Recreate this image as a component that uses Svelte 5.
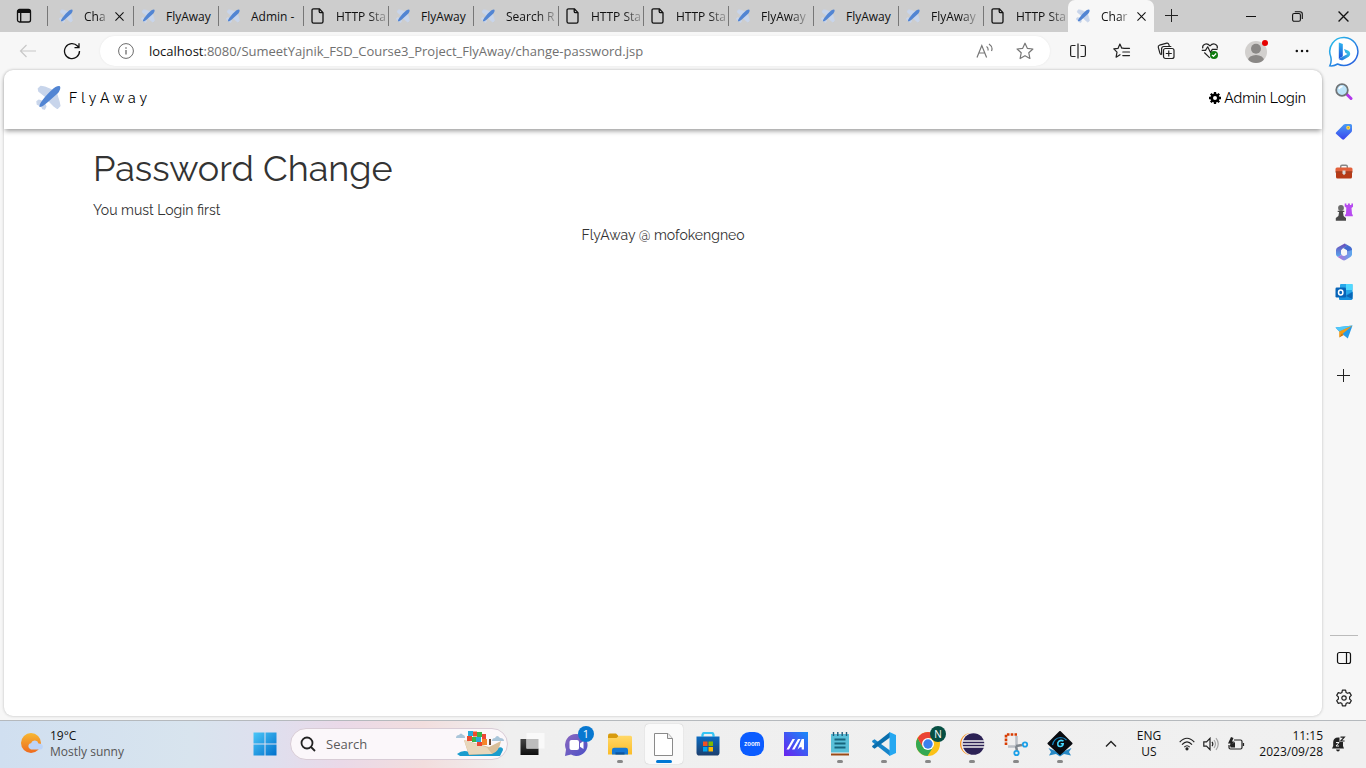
<script>
  const tabs = [
    { title: 'Cha', icon: 'plane', close: true },
    { title: 'FlyAway', icon: 'plane' },
    { title: 'Admin - ', icon: 'plane' },
    { title: 'HTTP Sta', icon: 'page', fade: true },
    { title: 'FlyAway', icon: 'plane' },
    { title: 'Search R', icon: 'plane', fade: true },
    { title: 'HTTP Sta', icon: 'page', fade: true },
    { title: 'HTTP Sta', icon: 'page', fade: true },
    { title: 'FlyAway', icon: 'plane', fade: true },
    { title: 'FlyAway', icon: 'plane' },
    { title: 'FlyAway', icon: 'plane', fade: true },
    { title: 'HTTP Sta', icon: 'page', fade: true },
    { title: 'Char', icon: 'plane', close: true, active: true }
  ];
  const tools = [
    ['split', 'Split screen'],
    ['favorites', 'Favorites'],
    ['collections', 'Collections'],
    ['health', 'Browser essentials'],
    ['avatar', 'Profile'],
    ['dots', 'Settings and more']
  ];
  const side = [
    ['search', 'Search'],
    ['tag', 'Shopping'],
    ['toolbox', 'Tools'],
    ['chess', 'Games'],
    ['m365', 'Microsoft 365'],
    ['outlook', 'Outlook'],
    ['drop', 'Drop']
  ];
  const apps = [
    { icon: 'taskview', name: 'Task view' },
    { icon: 'chat', name: 'Chat', badge: '1' },
    { icon: 'folder', name: 'File Explorer', run: true },
    { icon: 'blank', name: 'Document', active: true },
    { icon: 'store', name: 'Microsoft Store' },
    { icon: 'zoom', name: 'Zoom' },
    { icon: 'myasus', name: 'MyASUS' },
    { icon: 'notepad', name: 'Notepad', run: true },
    { icon: 'vscode', name: 'Visual Studio Code', run: true },
    { icon: 'chrome', name: 'Chrome', run: true, badge: 'N', green: true },
    { icon: 'eclipse', name: 'Eclipse', run: true },
    { icon: 'snip', name: 'Snipping Tool', run: true },
    { icon: 'glow', name: 'Game tool', run: true }
  ];
</script>

{#snippet plane(size)}
  <svg width={size} height={size} viewBox="0 0 24 24" aria-hidden="true">
    <g fill="#c8d5eb" stroke="#c8d5eb" stroke-width="1.2" stroke-linejoin="round">
      <path d="M2.200 3.500 4.500 1.300 8.500 2 16.500 5.300 10.500 13 8.500 10.500 2.700 6Z" />
      <path d="M19.500 7.500 22 15.500 23 20 20.500 22.500 17.500 20.500 11 14Z" />
      <path d="M.9 15.800 2.600 14.600 7 16 9.500 20.500 8.200 23.200 6.400 22.800 5.400 20.500 1.200 18.500Z" />
    </g>
    <path d="M3.400 21C2.800 19.500 5 15.700 8 12.300 12.500 7.200 18 1 21.900 1 24.400 1 23.300 5 21.200 7.600L12.300 15.700C9 18.700 4.500 22 3.400 21Z" fill="#5285d3" />
  </svg>
{/snippet}

{#snippet cross(size)}
  <svg width={size} height={size} viewBox="0 0 10 10" stroke="#111" stroke-width="1.2" aria-hidden="true"><path d="M.5.5l9 9M9.500.5l-9 9" /></svg>
{/snippet}

{#snippet ico(name)}
  {#if name === 'plane'}
    {@render plane(14)}
  {:else if name === 'page'}
    <svg width="14" height="16" viewBox="0 0 14 16" fill="none" stroke="#111" stroke-width="1.3" stroke-linejoin="round"><path d="M8.300.8H2.600Q1 .8 1 2.400V13.600Q1 15.200 2.600 15.200H10.400Q12 15.200 12 13.600V4.600ZM8.200.8V3.400Q8.200 4.700 9.500 4.700H12" /></svg>
  {:else if name === 'split'}
    <svg width="16" height="16" viewBox="0 0 16 16" fill="none" stroke="#222" stroke-width="1.2"><path d="M5.500 2.500H2Q.6 2.500.6 4v8q0 1.500 1.400 1.500h3.500M10.500 2.500h3.500q1.400 0 1.400 1.500v8q0 1.500-1.400 1.500h-3.500M8 .500v15" /></svg>
  {:else if name === 'favorites'}
    <svg width="18" height="16" viewBox="0 0 18 16" fill="none" stroke="#222" stroke-width="1.2" stroke-linejoin="round" stroke-linecap="round"><path d="M10.300 5.200H8.800L6.900 1 5 5.400.8 5.900 4 9.200 3.100 14.200 7 11.700M10.600 5.300H16.500M9.800 9H16.500M9.800 12.600H16.500" /></svg>
  {:else if name === 'collections'}
    <svg width="18" height="18" viewBox="0 0 18 18" fill="none" stroke="#222" stroke-width="1.2"><rect x="6.500" y="6.500" width="10.500" height="10" rx="2" /><path d="M11.750 8.500v6M8.800 11.500h6M4.400 12.700Q3.200 12.500 2.900 11.200L1.300 5.300Q.9 3.700 2.500 3.200L9.800 1.200Q11.300.9 11.800 2.400L12.300 4.200M4.600 12.700V6.700Q4.600 4.500 6.800 4.500H14.300" /></svg>
  {:else if name === 'health'}
    <svg width="18" height="18" viewBox="0 0 18 18" fill="none" stroke="#222" stroke-width="1.2" stroke-linejoin="round"><path d="M1.700 6.300C1 2.300 5.700.2 9 3.900 12.300.2 17 2.300 16.300 6.300M.7 8.400H4.500L6.700 4.800 9.500 10.500 11.300 7.400H16.500M3.300 10.500 8.800 15.900" /><circle cx="13" cy="13" r="4" fill="#107c10" stroke="none" /><path d="M11 13l1.500 1.400 2.600-2.900" stroke="#fff" /></svg>
  {:else if name === 'avatar'}
    <svg width="24" height="24" viewBox="0 0 24 24"><clipPath id="av"><circle cx="12" cy="13" r="11" /></clipPath><circle cx="12" cy="13" r="11" fill="#d2d0ce" /><circle cx="12" cy="9.700" r="5" fill="#8a8886" /><ellipse cx="12" cy="21.500" rx="8" ry="5.500" fill="#8a8886" clip-path="url(#av)" /><circle cx="21" cy="4" r="3" fill="#e60000" /></svg>
  {:else if name === 'dots'}
    <svg width="16" height="4" viewBox="0 0 16 4" fill="#111"><circle cx="2.800" cy="2" r="1.250" /><circle cx="8" cy="2" r="1.250" /><circle cx="13.200" cy="2" r="1.250" /></svg>
  {:else if name === 'bing'}
    <svg width="32" height="32" viewBox="0 0 32 32"><path d="M16.500 1.500A14 14 0 1 1 9.600 28Q6 30.300 1.800 29.800 4 25.500 2.700 20.500A14 14 0 0 1 16.500 1.500Z" fill="#fff" stroke="url(#bingRing)" stroke-width="1.500" /><path d="M10.800 6.500 14.800 8V20.300L10.800 22.800Z" fill="url(#bingB)" /><path d="M10.800 22.800C12 24.500 14 24.500 15.500 23.700L20.700 20.700C23.500 18.500 22 15.500 20 14.500L16 13 17.400 16.800 19.500 18Z" fill="url(#bingC)" /></svg>
  {:else if name === 'search'}
    <svg width="18" height="18" viewBox="0 0 18 18"><path d="M11.500 11 16 15.500" stroke="#b236eb" stroke-width="3" stroke-linecap="round" /><circle cx="7" cy="7" r="5.800" fill="#bde4fa" stroke="#707477" stroke-width="1.800" /><path d="M4 6q1-2.500 3.500-2.500" stroke="#fff" stroke-width="1.500" fill="none" /></svg>
  {:else if name === 'tag'}
    <svg width="18" height="18" viewBox="0 0 18 18"><path d="M1 9.500 8.800 1.600Q9.500 1 10.500 1H15.500Q17 1 17 2.500V7.500Q17 8.500 16.300 9.200L9.200 16.300Q8.200 17.200 7.200 16.300L1 10.800Q.4 10.200 1 9.500Z" fill="url(#tagG)" /><circle cx="13.200" cy="4.700" r="2" fill="#ffd84d" /><circle cx="13.200" cy="4.700" r=".8" fill="#c99a12" /></svg>
  {:else if name === 'toolbox'}
    <svg width="18" height="18" viewBox="0 0 18 18"><path d="M5.700 5V3.500Q5.700 2.200 7 2.200H11Q12.300 2.200 12.300 3.500V5" fill="none" stroke="#858585" stroke-width="1.400" /><rect x=".5" y="4.500" width="17" height="5" rx="1.500" fill="#e2603b" /><path d="M1 9.300H17V14Q17 15.500 15.500 15.500H2.500Q1 15.500 1 14Z" fill="#b63a17" /><path d="M.5 9h17" stroke="#87280d" /><path d="M7.500 7.600h3v3l-1.500 1.600-1.500-1.600z" fill="#d9d9d9" /></svg>
  {:else if name === 'chess'}
    <svg width="18" height="18" viewBox="0 0 18 18"><path d="M9.700.5h1.700v1.500h1.500V.5h2v1.500h1.500V.5H18v3.200l-1.500 1.200.5 6 .8 1v1.300H10V12l1-1.200.3-6L9.700 3.500Z" fill="#b74bf0" /><circle cx="6" cy="5" r="2.900" fill="#6b6b6b" /><path d="M2.700 7.700H9.300V9H8L8.600 13 11 15V17.700H.8V15L3.400 13 4.100 9H2.700Z" fill="#494949" /></svg>
  {:else if name === 'm365'}
    <svg width="18" height="18" viewBox="0 0 18 18"><path d="M9.800.5 2.800 4.200Q1 5.200 1 7V11Q1 13 3 14L6.500 12V7.400Q6.500 6 8 5.200L12 3Z" fill="url(#mA)" /><path d="M9.800.5 15.500 3.800Q17 4.700 17 6.600V11.200L12 8.500 8.200 5 11.500 3Z" fill="#436bcf" /><path d="M17 7V11.200Q17 13 15.400 14L10.500 17Q9 17.800 7.500 17L2.700 14 6.500 12Q9 13.500 10.500 12.500L12 11.500V8.500Z" fill="url(#mB)" /><path d="M9 5.500 12 7.300V10.700L9 12.500 6 10.700V7.300Z" fill="#f7f7f7" /></svg>
  {:else if name === 'outlook'}
    <svg width="18" height="18" viewBox="0 0 18 18"><rect x="5" y="1" width="12.500" height="13" rx="1" fill="#28a8ea" /><path d="M11 1h6.500v6H11z" fill="#50d9ff" /><path d="M4 9.500 11 12l6.500-3.500V15.500Q17.500 17 16 17H5Q4 17 4 16Z" fill="#1490df" /><path d="M11 13l6.500-4v7z" fill="#0a66b5" /><rect x=".5" y="4.500" width="10.500" height="10" rx="1.200" fill="#0764b8" /><ellipse cx="5.700" cy="9.500" rx="2.200" ry="2.500" fill="none" stroke="#fff" stroke-width="1.500" /></svg>
  {:else if name === 'drop'}
    <svg width="18" height="18" viewBox="0 0 18 18"><path d="M.5 4.500 17.500 2.500 12.800 15.500 4 8.300Z" fill="#249bea" /><path d="M.5 4.500 17.500 2.500 4.500 8.500Z" fill="#50c9fa" /><path d="M17.500 2.500 4.200 8.400V14.500L6.800 11.500Z" fill="#f29b17" /><path d="M4.200 14.500 6.900 10.500 8.800 12Z" fill="#c6710b" /></svg>
  {:else if name === 'plus'}
    <svg width="14" height="14" viewBox="0 0 14 14" stroke="#222" stroke-width="1"><path d="M6.500 0v13M0 6.500h13" /></svg>
  {:else if name === 'panel'}
    <svg width="16" height="14" viewBox="0 0 16 14" fill="none" stroke="#111" stroke-width="1.200"><rect x="1.500" y="1.500" width="13" height="11" rx="2" /><path d="M10.500 1.500v11" /></svg>
  {:else if name === 'gear'}
    <svg width="18" height="18" viewBox="0 0 18 18" fill="none" stroke="#222" stroke-width="1.200" stroke-linejoin="round"><circle cx="9" cy="9" r="2.200" /><path d="M7.400 1.200h3.200l.5 2.300 1.300.8 2.300-.7 1.600 2.800-1.700 1.600v2l1.700 1.600-1.600 2.800-2.300-.7-1.300.8-.5 2.300H7.400l-.5-2.300-1.300-.8-2.300.7-1.600-2.800L3.400 10V8L1.700 6.400l1.600-2.800 2.300.7 1.300-.8Z" /></svg>
  {:else if name === 'taskview'}
    <svg width="26" height="26" viewBox="0 0 26 26"><rect x="1.500" y="8" width="18" height="16" fill="url(#tv)" /><path d="M7.500 2h18v15.500h-18z" fill="#f9f9f9" /><path d="M7.500 8h12v9.500h-12z" fill="#bcbcbc" /></svg>
  {:else if name === 'chat'}
    <svg width="26" height="26" viewBox="0 0 26 26"><path d="M13 3A11 11 0 1 1 8 23.500L2 25 3 18.500A11 11 0 0 1 13 3Z" fill="url(#chatG)" /><rect x="6.500" y="9" width="9.500" height="10" rx="2" fill="#fff" /><path d="M17 12.500 20.500 10v8L17 15.700Z" fill="#fff" /></svg>
  {:else if name === 'folder'}
    <svg width="26" height="26" viewBox="0 0 26 26"><path d="M1 4.500Q1 2.500 3 2.500H9L11.500 5V8H1Z" fill="#d89b0d" /><path d="M1 7H9.500L12 4.800H23.500Q25 4.800 25 6.300V23.500H1Z" fill="url(#foldG)" /><path d="M5 23.500V19Q5 16.800 7.200 16.800H18.800Q21 16.800 21 19V23.500Z" fill="#1478d4" /><path d="M8.500 21.300h9v2.200h-9z" fill="#0b559f" /></svg>
  {:else if name === 'blank'}
    <svg width="22" height="26" viewBox="0 0 22 26"><path d="M1.500 2.500H15L19.500 7.500V24.500H1.500Z" fill="#fff" stroke="#8a8a8a" /><path d="M14.500 2.500V7.500H19.500" fill="#eee" stroke="#8a8a8a" /></svg>
  {:else if name === 'store'}
    <svg width="26" height="26" viewBox="0 0 26 26"><path d="M7.500 8V4Q7.500 2 9.500 2H16.500Q18.500 2 18.500 4V8" fill="none" stroke="#36c5f5" stroke-width="1.800" /><path d="M1.500 5.500h23v16.200Q24.500 24.500 21.700 24.500H4.300Q1.500 24.500 1.500 21.700Z" fill="url(#storeG)" /><path d="M7.500 5.500V4Q7.500 2 9.500 2H16.500Q18.500 2 18.500 4V5.500" fill="none" stroke="#36c5f5" stroke-width="1.800" /><path d="M8 10.500h4.500V15H8z" fill="#f25022" /><path d="M13.500 10.500H18V15h-4.500z" fill="#7fba00" /><path d="M8 16h4.500v4.500H8z" fill="#00a4ef" /><path d="M13.500 16H18v4.500h-4.500z" fill="#ffb900" /></svg>
  {:else if name === 'zoom'}
    <svg width="26" height="26" viewBox="0 0 26 26"><rect x="1" y="1" width="24" height="24" rx="9.500" fill="#0b5cff" /><text x="13" y="15" text-anchor="middle" font-family="Inter, sans-serif" font-size="6" font-weight="600" fill="#fff">zoom</text></svg>
  {:else if name === 'myasus'}
    <svg width="26" height="26" viewBox="0 0 26 26"><rect x="1" y="1" width="24" height="24" fill="url(#asusG)" /><path d="M3.500 18.500 9.500 8H12L6 18.500ZM9 18.500 15 8h2.500l-6 10.500ZM14.500 18.500 18.700 8H21v10.500h-2.300V16.300H17Z" fill="#fff" /></svg>
  {:else if name === 'notepad'}
    <svg width="20" height="26" viewBox="0 0 20 26"><path d="M1 3h18v19H1z" fill="#59bfd8" /><path d="M1 22h18v2.500H1z" fill="#9b4a16" /><path d="M1 21.500h18v1H1z" fill="#f2f2f2" /><path d="M3.500 1v4M7.800 1v4M12.200 1v4M16.500 1v4" stroke="#235a78" stroke-width="1.400" /><path d="M4.500 8.500h11M4.500 12.500h11M4.500 16.500h11" stroke="#17647c" stroke-width="1.800" /></svg>
  {:else if name === 'vscode'}
    <svg width="26" height="26" viewBox="0 0 26 26"><path d="M1.200 9.800 3.500 8.300 19 19.500V25L1.200 11Z" fill="#1684c9" /><path d="M1.200 16 3.500 17.700 19 6.500V1L1.200 15Z" fill="#096ead" /><path d="M18.500 1 25 4V22L18.500 25Z" fill="#26a8f1" /></svg>
  {:else if name === 'chrome'}
    <svg width="26" height="26" viewBox="0 0 26 26"><circle cx="13" cy="13" r="12" fill="#fbc116" /><path d="M2.600 7A12 12 0 0 0 12.500 25L18.200 16 13 13 7.800 16Z" fill="#34a853" /><path d="M2.600 7A12 12 0 0 1 23.400 7H13V13L7.800 16Z" fill="#ea4335" /><circle cx="13" cy="13" r="6" fill="#fff" /><circle cx="13" cy="13" r="4.700" fill="#3b80ee" /></svg>
  {:else if name === 'eclipse'}
    <svg width="26" height="26" viewBox="0 0 26 26"><circle cx="12" cy="13" r="11" fill="#f7941e" /><circle cx="13.500" cy="13" r="11.200" fill="#f3f0f7" /><circle cx="14.500" cy="13" r="10.800" fill="#2c2255" /><path d="M4 10h21.500M3.500 13h22.500M4 16h21.500" stroke="#eee" stroke-width="1.300" /></svg>
  {:else if name === 'snip'}
    <svg width="26" height="26" viewBox="0 0 26 26"><path d="M3 14V3.500H14" fill="none" stroke="#d83b01" stroke-width="2.600" stroke-dasharray="2.600 1.200" /><path d="M13.500 5V15.500H5" fill="none" stroke="#babfc5" stroke-width="2.500" /><path d="M13 15 19 14M13 15 14 20" stroke="#7d858c" stroke-width="2.500" /><circle cx="22" cy="13.500" r="2.200" fill="none" stroke="#1ca0e8" stroke-width="1.800" /><circle cx="13.500" cy="22" r="2.200" fill="none" stroke="#1ca0e8" stroke-width="1.800" /></svg>
  {:else if name === 'glow'}
    <svg width="26" height="26" viewBox="0 0 26 26"><path d="M1.500 17 13 22 24.500 17 22 21 24 24.500 17 23 13 25.500 9 23 2 24.500 4 21Z" fill="#2789c6" /><path d="M13 1 24.500 12.500 13 23 1.500 12.500Z" fill="#090b10" stroke="#090b10" stroke-width="2" stroke-linejoin="round" /><path d="M5.500 14Q7 7 13.500 6.500 17 6.500 19.500 9" fill="none" stroke="#1387c5" stroke-width="1.200" /><path d="M16.500 10Q12.500 8.200 11 11.500 10 15.500 13.300 15.500 16 15.300 16.200 12.700H13.700" fill="none" stroke="#46d7ff" stroke-width="1.600" /></svg>
  {/if}
{/snippet}

<div class="screen">
  <svg class="defs" width="0" height="0" aria-hidden="true">
    <defs>
      <linearGradient id="bingRing" x1="0" y1="0" x2="1" y2="1"><stop offset="0" stop-color="#29c3ea" /><stop offset="1" stop-color="#2655dd" /></linearGradient>
      <linearGradient id="bingB" x1="0" y1="0" x2="0" y2="1"><stop offset="0" stop-color="#2eb7f0" /><stop offset="1" stop-color="#1b4dd8" /></linearGradient>
      <linearGradient id="bingC" x1="0" y1="1" x2="1" y2="0"><stop offset="0" stop-color="#1e67de" /><stop offset="1" stop-color="#3fd6e7" /></linearGradient>
      <linearGradient id="tagG" x1="0" y1="0" x2="0" y2="1"><stop offset="0" stop-color="#4a9bf5" /><stop offset="1" stop-color="#3944ee" /></linearGradient>
      <linearGradient id="mA" x1="0" y1="0" x2="0" y2="1"><stop offset="0" stop-color="#6a49b8" /><stop offset="1" stop-color="#58a9f0" /></linearGradient>
      <linearGradient id="mB" x1="0" y1="0" x2="1" y2="0"><stop offset="0" stop-color="#b56fd8" /><stop offset="1" stop-color="#5ba8ee" /></linearGradient>
      <linearGradient id="tv" x1="0" y1="0" x2="0" y2="1"><stop offset="0" stop-color="#444" /><stop offset="1" stop-color="#0e0e0e" /></linearGradient>
      <linearGradient id="chatG" x1="0" y1="0" x2="1" y2="1"><stop offset="0" stop-color="#8c68bf" /><stop offset="1" stop-color="#4b50c6" /></linearGradient>
      <linearGradient id="foldG" x1="0" y1="0" x2="0" y2="1"><stop offset="0" stop-color="#ffd868" /><stop offset="1" stop-color="#fbbc28" /></linearGradient>
      <linearGradient id="storeG" x1="0" y1="0" x2="0" y2="1"><stop offset="0" stop-color="#0b6bc2" /><stop offset="1" stop-color="#1c3f6e" /></linearGradient>
      <linearGradient id="asusG" x1="0" y1="1" x2="1" y2="0"><stop offset="0" stop-color="#6b22ee" /><stop offset="1" stop-color="#168bf8" /></linearGradient>
      <linearGradient id="winG" x1="0" y1="0" x2="1" y2="1"><stop offset="0" stop-color="#4cc7f8" /><stop offset="1" stop-color="#0070cc" /></linearGradient>
      <linearGradient id="sunG" x1="0" y1="0" x2="0" y2="1"><stop offset="0" stop-color="#f7b832" /><stop offset="1" stop-color="#ee6a1e" /></linearGradient>
    </defs>
  </svg>

  <header class="tabbar">
    <button class="tabmenu" aria-label="Tab actions">
      <svg width="16" height="16" viewBox="0 0 16 16" fill="none" stroke="#111" stroke-width="1.300"><rect x="1.500" y="1.500" width="13" height="12.500" rx="2" /><path d="M1.500 3.500h13" stroke-width="3" /><path d="M4.700 4v10" /></svg>
    </button>
    <nav class="tabs" aria-label="Tabs">
      {#each tabs as tab}
        <div class="tab" class:closable={tab.close} class:active={tab.active}>
          <span class="ticon">{@render ico(tab.icon)}</span>
          <span class="title" class:fade={tab.fade || tab.close}>{tab.title}</span>
          {#if tab.close}<button class="close" aria-label="Close tab">{@render cross(9)}</button>{/if}
        </div>
      {/each}
    </nav>
    <button class="newtab" aria-label="New tab">{@render ico('plus')}</button>
    <div class="window">
      <button aria-label="Minimize"><svg width="10" height="10" viewBox="0 0 10 10" stroke="#111"><path d="M0 5.500h10" /></svg></button>
      <button aria-label="Restore"><svg width="11" height="11" viewBox="0 0 11 11" fill="none" stroke="#111" stroke-width="1.100"><rect x=".6" y="2.500" width="7.800" height="7.800" rx="1.500" /><path d="M2.800.7H8Q10.300.7 10.300 3V8" /></svg></button>
      <button aria-label="Close">{@render cross(11)}</button>
    </div>
  </header>

  <div class="browser">
    <div class="main">
      <div class="toolbar">
        <button class="back" aria-label="Back"><svg width="18" height="14" viewBox="0 0 18 14" fill="none" stroke="#c8c8c8" stroke-width="1.200"><path d="M17 7H1.500M7.500 1 1.500 7l6 6" /></svg></button>
        <button class="reload" aria-label="Refresh"><svg width="18" height="18" viewBox="0 0 18 18" fill="none" stroke="#111" stroke-width="1.300"><path d="M16.500 9A7.500 7.500 0 1 1 14.500 4L16 5.700M16 1.200V5.700H11.500" /></svg></button>
        <div class="address">
          <svg width="16" height="16" viewBox="0 0 16 16" fill="none" stroke="#6b6b6b"><circle cx="8" cy="8" r="7.400" /><path d="M8 7v4.500M8 4.200v1.500" stroke-width="1.300" /></svg>
          <span class="url"><b>localhost</b>:8080/SumeetYajnik_FSD_Course3_Project_FlyAway/change-password.jsp</span>
          <button aria-label="Read aloud"><svg width="18" height="16" viewBox="0 0 18 16" fill="none" stroke="#777" stroke-width="1.200"><path d="M1 14.500 5.800 2.500 10.600 14.500M2.700 10h6.200M10.500 3.500q2 1.300 1.500 4M13 1Q17.300 4 15.500 8" /></svg></button>
          <button aria-label="Add to favorites"><svg width="18" height="18" viewBox="0 0 18 18" fill="none" stroke="#777" stroke-width="1.200" stroke-linejoin="round"><path d="M9 1.200 11.300 6.300 16.900 7 12.800 10.800 13.900 16.500 9 13.700 4.100 16.500 5.200 10.800 1.100 7 6.700 6.300Z" /></svg></button>
        </div>
        <div class="tools">
          {#each tools as [icon, label]}<button aria-label={label}>{@render ico(icon)}</button>{/each}
        </div>
      </div>

      <div class="page">
        <header class="sitebar">
          <a class="brand" href="#home">{@render plane(25)}<span>FlyAway</span></a>
          <a class="admin" href="#admin"><svg width="12" height="12" viewBox="0 0 12 12" fill="none" stroke="#000"><circle cx="6" cy="6" r="3.300" stroke-width="2.600" /><path d="M6 0v2.500M6 9.500V12M0 6h2.500M9.500 6H12M1.800 1.800l1.700 1.700M8.500 8.500l1.700 1.700M10.200 1.800 8.500 3.500M3.500 8.500 1.800 10.200" stroke-width="2.300" /></svg>Admin Login</a>
        </header>
        <main class="content">
          <h1>Password Change</h1>
          <p>You must Login first</p>
        </main>
        <footer>FlyAway @ mofokengneo</footer>
      </div>
    </div>

    <aside class="sidebar">
      <button class="bing" aria-label="Bing chat">{@render ico('bing')}</button>
      {#each side as [icon, label]}<button aria-label={label}>{@render ico(icon)}</button>{/each}
      <button class="add" aria-label="Customize">{@render ico('plus')}</button>
      <hr />
      <button aria-label="Hide sidebar">{@render ico('panel')}</button>
      <button aria-label="Settings">{@render ico('gear')}</button>
    </aside>
  </div>

  <footer class="taskbar">
    <button class="weather">
      <svg width="24" height="24" viewBox="0 0 24 24"><circle cx="11" cy="11" r="10" fill="url(#sunG)" /><path d="M11 17.500a3.200 3.200 0 0 1 0-6.300Q12 8.300 15 8.600 17.800 8.800 18.500 11.500 22.700 11.500 22.900 14.500 22.800 17.500 20 17.500Z" fill="#bdd4f8" /></svg>
      <span>19°C<small>Mostly sunny</small></span>
    </button>
    <button class="start" aria-label="Start"><svg width="24" height="24" viewBox="0 0 24 24"><path d="M.5.5H11.500V11.500H.5ZM12.500.5h11v11h-11zM.5 12.500h11v11H.5zM12.500 12.500h11v11h-11z" fill="url(#winG)" /></svg></button>
    <label class="find">
      <svg width="16" height="16" viewBox="0 0 16 16" fill="none" stroke="#222" stroke-width="1.800"><circle cx="7" cy="7" r="5.500" /><path d="M11 11l4 4" /></svg>
      <input aria-label="Search" placeholder="Search" />
      <svg width="50" height="28" viewBox="0 0 50 28"><path d="M1 8q0-3 3-3 2-3 4 0 2 0 2 3zM37 11q0-3 3-3 2-4 5 0 4 0 4 3z" fill="#a9c5d9" /><path d="M2 24Q8 19 14 22L42 18Q48 16 48 20L45 26H5Z" fill="#1a9ccd" /><path d="M9 10 34 17 46 11Q44 22 37 24L14 25Q12 20 9 10Z" fill="#d9bf9a" /><path d="M9 10 32 17.500 37 24H14Z" fill="#e8d7bc" /><path d="M12 6h5v5h-5z" fill="#e84b2e" /><path d="M13 1h5v5h-5zM21 7h5v5h-5z" fill="#27a9d8" /><path d="M18 1.500h4v5h-4z" fill="#f04d2b" /><path d="M22 2h5v5h-5zM17 7h4v5h-4z" fill="#39b54a" /><path d="M27 4h4v5h-4zM22 12h5v4h-5z" fill="#eb4735" /><path d="M27 9h5v6h-5z" fill="#f5852a" /><path d="M35 9v6" stroke="#6a4732" stroke-width="2" /></svg>
    </label>
    <div class="apps">
      {#each apps as app}
        <button class="app" class:open={app.active} class:running={app.run} aria-label={app.name}>
          {@render ico(app.icon)}
          {#if app.badge}<span class="badge" class:green={app.green}>{app.badge}</span>{/if}
        </button>
      {/each}
    </div>
    <div class="tray">
      <button class="up" aria-label="Show hidden icons"><svg width="12" height="8" viewBox="0 0 12 8" fill="none" stroke="#222" stroke-width="1.400"><path d="M1 6.500l5-5 5 5" /></svg></button>
      <span class="lang">ENG<br />US</span>
      <button class="status" aria-label="Network, volume and battery">
        <svg width="16" height="14" viewBox="0 0 16 14" fill="none" stroke="#222" stroke-width="1.200"><path d="M.7 5.200Q8-2.700 15.300 5.200M3 7.700Q8 2.200 13 7.700M5.300 10.200Q8 7.300 10.700 10.200" /><circle cx="8" cy="11.800" r="1" fill="#222" /></svg>
        <svg width="16" height="14" viewBox="0 0 16 14" fill="none" stroke="#222" stroke-width="1.200"><path d="M.8 4.800H3.500L7 1.300V12.700L3.500 9.200H.8ZM9 4.800q1.600 2.200 0 4.400" /><path d="M11 3q3 4 0 8M13 1.200q4.500 5.800 0 11.600" stroke="#a5a5a5" /></svg>
        <svg width="18" height="14" viewBox="0 0 18 14" fill="none" stroke="#222" stroke-width="1.200"><path d="M7 3H13.500Q15 3 15 4.500V10.500Q15 12 13.500 12H3.500Q2 12 2 10.500V8M16.500 6v3" /><path d="M4 0 1 6.500H3.500L2.500 10.500 7.500 4.500H5L6.500 1Z" fill="#222" stroke="none" /><path d="M3.500 8 8 5V10.500H3.500Z" fill="#222" stroke="none" /></svg>
      </button>
      <span class="clock">11:15<br />2023/09/28</span>
      <button class="bell" aria-label="Notifications"><svg width="15" height="16" viewBox="0 0 15 16"><path d="M1 12.500 2.200 10V6Q2.500 1.500 7 1.500H8.500V6H12V10L13 12.500ZM5 13.500H9Q8.500 15.500 7 15.500T5 13.500Z" fill="#222" /><path d="M9.500 1.200h3.800L9.800 5h3.800" fill="none" stroke="#222" stroke-width="1.200" /><path d="M5 6.500h3L5 10h3" fill="none" stroke="#f0f0f0" /></svg></button>
    </div>
  </footer>
</div>

<style>
  :global(body) { margin: 0; }
  .screen { display: flex; flex-direction: column; min-height: 100vh; background: #f7f7f7; font-family: "Open Sans", sans-serif; color: #111; }
  .screen, .screen * { box-sizing: border-box; }
  .defs { position: absolute; }
  svg { display: block; flex: none; }
  button { display: flex; align-items: center; justify-content: center; flex: none; border: 0; padding: 0; background: none; font: inherit; color: inherit; }

  .tabbar { display: flex; height: 32px; background: #cdcdcd; }
  .tabmenu { width: 47px; }
  .tabs { display: flex; min-width: 0; }
  .tab { display: flex; align-items: center; width: 85px; padding-left: 8px; background: linear-gradient(#777, #777) left 50% / 1px 20px no-repeat; font-size: 12px; }
  .ticon { width: 25px; flex: none; }
  .title { white-space: nowrap; }
  .title.fade { mask-image: linear-gradient(90deg, #000 65%, rgba(0, 0, 0, 0.25) 100%); }
  .tab.closable { width: 86px; padding-left: 12px; }
  .close { width: 28px; height: 24px; margin: 0 2px 0 auto; }
  .tab.active { background: #f7f7f7; border-radius: 7px 7px 0 0; padding-left: 8px; }
  .newtab { width: 36px; }
  .window { display: flex; margin-left: auto; }
  .window button { width: 46px; }

  .browser { display: flex; flex: 1; }
  .main { flex: 1; min-width: 0; display: flex; flex-direction: column; padding: 0 0 4px 4px; }
  .toolbar { display: flex; align-items: center; height: 38px; }
  .back { width: 48px; height: 38px; }
  .reload { width: 40px; height: 38px; margin-right: 8px; }
  .address { display: flex; align-items: center; flex: 1; min-width: 0; height: 30px; padding: 0 5px 0 18px; border-radius: 15px; background: #fff; box-shadow: 0 0 2px #e4e4e4; }
  .address button { width: 40px; height: 30px; }
  .url { flex: 1; min-width: 0; padding-left: 15px; white-space: nowrap; font-size: 13px; color: #707070; }
  .url b { font-weight: 400; color: #111; }
  .tools { display: flex; padding-left: 6px; margin-right: -2px; }
  .tools button { width: 44px; height: 38px; }
  .tools button:nth-child(5) { width: 48px; }

  .page { flex: 1; background: #fff; border-radius: 9px; box-shadow: 0 0 3px #bbb; font-family: Raleway, Lato, sans-serif; font-weight: 400; font-size: 14px; line-height: 20px; color: #333; }
  .sitebar { display: flex; align-items: center; justify-content: space-between; height: 59px; padding: 0 16px 4px 32px; border-radius: 9px 9px 0 0; box-shadow: 0 3px 5px -1px #999; }
  .sitebar a { display: flex; align-items: center; color: #000; text-decoration: none; }
  .brand { gap: 8px; letter-spacing: 4px; }
  .admin { gap: 3px; }
  .content { padding: 19px 89px 0; }
  h1 { margin: 0 0 12px; font-size: 36px; line-height: 40px; font-weight: 400; }
  p { margin: 0 0 5px; }
  .page footer { text-align: center; }

  .sidebar { width: 44px; flex: none; display: flex; flex-direction: column; align-items: center; }
  .sidebar button { width: 44px; height: 40px; }
  .sidebar .add { height: 48px; }
  .sidebar hr { width: 28px; margin: auto 0 2px; border: 0; border-top: 1px solid #bbb; }
  .sidebar button:last-child { margin-bottom: 2px; }

  .taskbar { display: flex; height: 48px; box-shadow: inset 0 1px #b5b9bd; background: linear-gradient(90deg, #d0dff0 0, #d8e4ee 14%, #dfdfee 20%, #ead9e8 25%, #f2dede 31%, #efefef 37%, #f0f0f0 100%); }
  .weather { width: 243px; justify-content: flex-start; padding-left: 20px; gap: 6px; font-size: 12px; line-height: 16px; text-align: left; }
  .weather small { display: block; font-size: 12px; color: #555; }
  .start { width: 44px; }
  .find { display: flex; align-items: center; align-self: center; width: 218px; height: 32px; margin: 0 2px 0 3px; padding: 0 2px 0 9px; border: 1px solid #d8ccd6; border-radius: 16px; background: #fbf7fa; }
  .find input { flex: 1; min-width: 0; padding: 0 0 0 10px; border: 0; outline: 0; background: none; font: 13px "Open Sans", sans-serif; color: #555; }
  .find input::placeholder { color: #5b5b5b; opacity: 1; }
  .apps { display: flex; }
  .app { position: relative; width: 44px; }
  .app.open { width: 38px; height: 40px; margin: 4px 3px; border-radius: 4px; background: #fafafa; box-shadow: 0 0 1px #aaa; }
  .app.running::after, .app.open::after { content: ""; position: absolute; bottom: 5px; left: calc(50% - 3px); width: 6px; height: 3px; border-radius: 2px; background: #888; }
  .app.open::after { bottom: 1px; left: calc(50% - 8px); width: 16px; background: #0078d4; }
  .badge { position: absolute; top: 6px; left: 24px; width: 16px; height: 16px; border-radius: 8px; background: #0878d0; color: #fff; font-size: 11px; line-height: 16px; }
  .badge.green { background: #064f43; font-size: 10px; }
  .tray { display: flex; align-items: center; margin-left: auto; font-size: 12px; line-height: 16px; padding-right: 12px; }
  .tray button { height: 46px; }
  .up { width: 32px; }
  .lang { width: 44px; text-align: center; }
  .status { gap: 8px; padding: 0 8px; }
  .clock { width: 70px; text-align: right; }
  .bell { width: 31px; }
</style>
